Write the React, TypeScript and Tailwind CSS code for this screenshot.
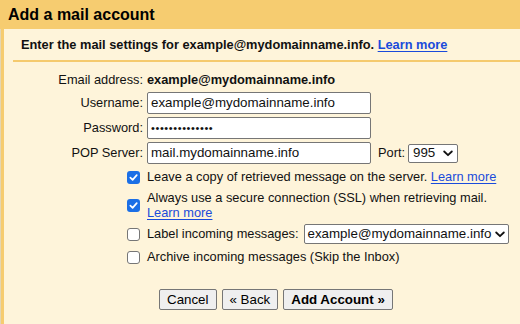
import { ReactNode } from 'react';

const Check = ({ on }: { on?: boolean }) =>
  on ? (
    <span className="flex h-[13px] w-[13px] items-center justify-center rounded-[3px] bg-[#1b6fe6]">
      <svg width="9" height="9" viewBox="0 0 10 10" fill="none">
        <path d="M1.5 5.2 L4 7.6 L8.6 2.4" stroke="white" strokeWidth="1.9" strokeLinecap="round" strokeLinejoin="round" />
      </svg>
    </span>
  ) : (
    <span className="block h-[13px] w-[13px] rounded-[3px] border border-[#767676] bg-white" />
  );

const Chevron = () => (
  <svg width="10" height="7" viewBox="0 0 10 7" fill="none">
    <path d="M1.2 1.5 L5 5.2 L8.8 1.5" stroke="#111" strokeWidth="1.8" strokeLinecap="round" strokeLinejoin="round" />
  </svg>
);

const Link = ({ children }: { children: ReactNode }) => (
  <span className="text-[#1a4bdb] underline underline-offset-[1.5px]">{children}</span>
);

const Field = ({ value, dots }: { value: string; dots?: boolean }) => (
  <div className={`flex h-[22px] w-[224px] items-center rounded-[2px] border border-[#767676] bg-white pl-[3px] ${dots ? 'text-[11px] tracking-[0.6px]' : 'text-[13.33px]'}`}>
    {value}
  </div>
);

export default function App() {
  return (
    <main className="h-[324px] w-[520px] overflow-hidden bg-[#fef4da] text-[12.8px] text-[#111] font-['Liberation_Sans',Arial,sans-serif]">
      <div className="flex h-[29px] items-center bg-[#f6cc70] pl-[8px] text-[16px] font-bold text-black">
        Add a mail account
      </div>

      <div className="flex h-[295px]">
        <div className="w-px bg-[#e3d6b5]" />
        <div className="flex-1 border-l-[3px] border-[#f6cc70]">
          <div className="ml-[9px] flex h-[33px] items-center border-b-2 border-[#f5ca6e] pl-[8px] font-bold">
            Enter the mail settings for example@mydomainname.info.&nbsp;<Link>Learn more</Link>
          </div>

          <div className="grid grid-cols-[139px_1fr] gap-x-[4px] gap-y-[3px] pt-[9px]">
            <div className="flex h-[18px] items-center justify-end">Email address:</div>
            <div className="flex h-[18px] items-center font-bold">example@mydomainname.info</div>

            <div className="flex h-[22px] items-center justify-end">Username:</div>
            <Field value="example@mydomainname.info" />

            <div className="flex h-[22px] items-center justify-end">Password:</div>
            <Field value="••••••••••••••" dots />

            <div className="flex h-[22px] items-center justify-end">POP Server:</div>
            <div className="flex items-center">
              <Field value="mail.mydomainname.info" />
              <span className="ml-[7px] mr-[3px]">Port:</span>
              <div className="flex h-[19px] w-[50px] items-center justify-between rounded-[2px] border border-[#767676] bg-white pl-[4px] pr-[4px] text-[13.33px]">
                995
                <Chevron />
              </div>
            </div>
          </div>

          <div className="mt-[4px] grid grid-cols-[136px_1fr] gap-x-[7px] gap-y-[4px]">
            <div className="flex h-[18px] items-center justify-end"><Check on /></div>
            <div className="flex h-[18px] items-center">
              Leave a copy of retrieved message on the server.&nbsp;<Link>Learn more</Link>
            </div>

            <div className="flex h-[30px] items-center justify-end"><Check on /></div>
            <div className="leading-[15px]">
              Always use a secure connection (SSL) when retrieving mail.
              <br />
              <Link>Learn more</Link>
            </div>

            <div className="flex h-[20px] items-center justify-end"><Check /></div>
            <div className="flex h-[20px] items-center">
              Label incoming messages:
              <div className="ml-[5px] flex h-[20px] w-[205px] items-center justify-between rounded-[2px] border border-[#767676] bg-white pl-[3px] pr-[3px] text-[13.33px]">
                example@mydomainname.info
                <Chevron />
              </div>
            </div>

            <div className="flex h-[18px] items-center justify-end"><Check /></div>
            <div className="flex h-[18px] items-center">Archive incoming messages (Skip the Inbox)</div>
          </div>

          <div className="ml-[155px] mt-[23px] flex gap-[5px]">
            {['Cancel', '« Back'].map((b) => (
              <button key={b} className="h-[21px] rounded-[2px] border border-[#767676] bg-[#efefef] px-[7px] text-[13.33px] text-black">
                {b}
              </button>
            ))}
            <button className="h-[21px] rounded-[2px] border border-[#767676] bg-[#efefef] px-[7px] text-[13.33px] font-bold text-black">
              Add Account »
            </button>
          </div>
        </div>
      </div>
    </main>
  );
}
